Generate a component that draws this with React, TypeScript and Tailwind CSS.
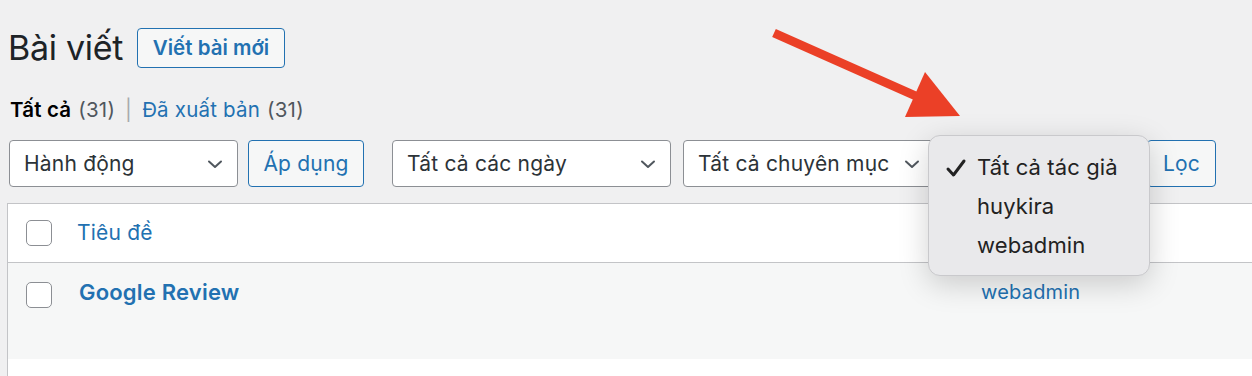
import React from "react";

const Chevron = () => (
  <svg width="18" height="18" viewBox="0 0 18 18" className="shrink-0">
    <path d="M3 6.5 L9 12 L15 6.5" fill="none" stroke="#50575e" strokeWidth="2" strokeLinecap="round" strokeLinejoin="round" />
  </svg>
);

const Select = ({ label, className }: { label: string; className: string }) => (
  <div className={`h-[47px] flex items-center justify-between bg-white border border-[#8c8f94] rounded-[4px] pl-[14px] pr-[13px] text-[21px] tracking-[0.2px] text-[#2c3338] ${className}`}>
    <span className="whitespace-nowrap">{label}</span>
    <Chevron />
  </div>
);

const Checkbox = () => (
  <div className="w-[26px] h-[26px] rounded-[5px] border border-[#8c8f94] bg-white shrink-0" />
);

export default function App() {
  return (
    <div className="relative w-[1252px] h-[376px] overflow-hidden bg-[#f0f0f1]" style={{ fontFamily: "Inter, 'Noto Sans', sans-serif" }}>
      <div className="pl-[8px]">
        <div className="pt-[28px] flex items-center h-[68px]">
          <h1 className="text-[34px] leading-[40px] text-[#1d2327] font-normal tracking-[-0.3px]">Bài viết</h1>
          <button className="ml-[14px] h-[40px] w-[148px] border border-[#2271b1] rounded-[4px] bg-[#f6f7f7] text-[#2271b1] text-[20.5px] font-semibold">Viết bài mới</button>
        </div>
        <div className="mt-[30px] h-[24px] flex items-center text-[20.5px] tracking-[0.2px] text-[#50575e]">
          <span className="ml-[2px] font-semibold text-[#000]">Tất cả</span>
          <span className="ml-[7px]">(31)</span>
          <span className="mx-[10px] text-[#a7aaad]">|</span>
          <span className="text-[#2271b1]">Đã xuất bản</span>
          <span className="ml-[7px]">(31)</span>
        </div>
        <div className="mt-[18px] flex items-center">
          <Select label="Hành động" className="ml-[1px] w-[229px]" />
          <button className="ml-[10px] h-[47px] w-[116px] border border-[#2271b1] rounded-[4px] bg-[#f6f7f7] text-[#2271b1] text-[21px] tracking-[0.2px]">Áp dụng</button>
          <Select label="Tất cả các ngày" className="ml-[28px] w-[279px]" />
          <Select label="Tất cả chuyên mục" className="ml-[12px] w-[252px]" />
          <div className="ml-[12px] w-[190px] h-[47px] bg-white border border-[#8c8f94] rounded-[4px]" />
          <button className="ml-[10px] h-[47px] w-[69px] border border-[#2271b1] rounded-[4px] bg-[#f6f7f7] text-[#2271b1] text-[21px] tracking-[0.2px]">Lọc</button>
        </div>
        <div className="mt-[16px] ml-[-1px] border-l border-t border-[#c3c4c7] bg-white">
          <div className="h-[59px] flex items-center border-b border-[#c3c4c7] pl-[18px]">
            <Checkbox />
            <span className="ml-[25px] text-[21px] tracking-[0.2px] text-[#2271b1]">Tiêu đề</span>
          </div>
          <div className="h-[96px] bg-[#f6f7f7] flex items-start pl-[18px] pt-[19px] relative">
            <Checkbox />
            <span className="ml-[27px] mt-[-6px] text-[22px] font-semibold tracking-[0.2px] text-[#2271b1]">Google Review</span>
            <span className="absolute left-[973px] top-[14px] text-[20px] tracking-[0.2px] text-[#2271b1]">webadmin</span>
          </div>
          <div className="h-[40px] bg-white" />
        </div>
      </div>

      <svg className="absolute left-0 top-0 pointer-events-none" width="1252" height="376">
        <line x1="774" y1="33" x2="918" y2="97" stroke="#eb4027" strokeWidth="9" />
        <polygon points="925,72 905,117 960,116" fill="#eb4027" />
      </svg>

      <div className="absolute left-[928px] top-[135px] w-[222px] h-[141px] rounded-[12px] border border-[#c9c9cc] bg-[#e9e9eb] shadow-[0_8px_30px_rgba(0,0,0,0.18)] pt-[12px] text-[22px] tracking-[0.1px] text-[#222]">
        <div className="h-[39px] flex items-center">
          <svg width="22" height="20" viewBox="0 0 22 20" className="ml-[16px]">
            <path d="M3 11 L8.5 17 L19 3" fill="none" stroke="#222" strokeWidth="3" strokeLinecap="round" strokeLinejoin="round" />
          </svg>
          <span className="ml-[10px]">Tất cả tác giả</span>
        </div>
        <div className="h-[39px] flex items-center pl-[48px]">huykira</div>
        <div className="h-[39px] flex items-center pl-[48px]">webadmin</div>
      </div>
    </div>
  );
}
